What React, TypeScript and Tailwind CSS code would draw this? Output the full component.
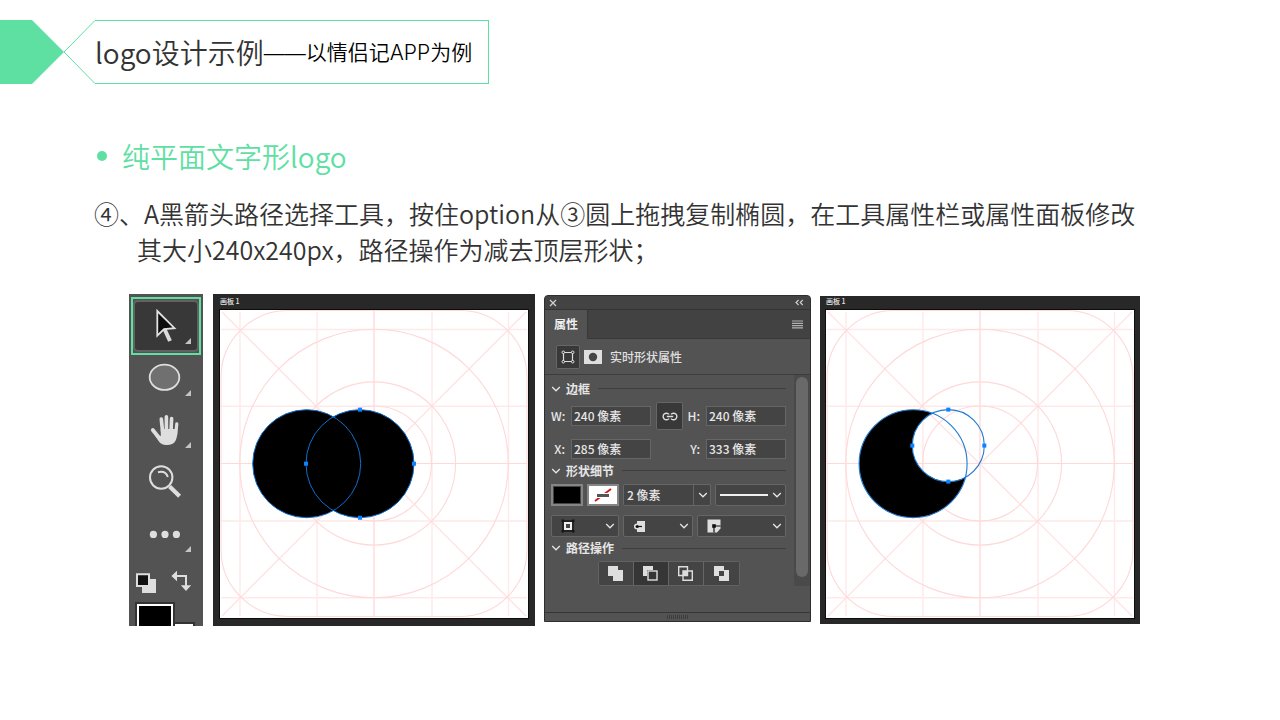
import type { ReactNode } from "react";

const FONT = "font-['Noto_Sans_CJK_SC','Noto_Sans',sans-serif]";

function Corner() {
  return <path d="M57 38 V44 H51 Z" fill="#c4c4c4" />;
}

const tools = [
  {
    name: "路径选择工具",
    active: true,
    icon: (
      <>
        <rect x="0" y="1" width="64" height="50" rx="4" fill="#383838" stroke="#626262" strokeWidth="2" />
        <path d="M30 28 L36 41" stroke="#dadada" strokeWidth="4" />
        <path d="M23.3 11 V35.6 L30 29 L40.5 28.2 Z" fill="#0d0d0d" stroke="#e0e0e0" strokeWidth="1.8" />
        <Corner />
      </>
    ),
  },
  {
    name: "椭圆工具",
    active: false,
    icon: (
      <>
        <ellipse cx="30.5" cy="25.3" rx="14.8" ry="12.6" fill="#707070" stroke="#dedede" strokeWidth="1.8" />
        <Corner />
      </>
    ),
  },
  {
    name: "抓手工具",
    active: false,
    icon: (
      <>
        <g stroke="#dedede" strokeWidth="3.6" strokeLinecap="round">
          <path d="M27.3 15 L28.6 28" />
          <path d="M32.4 12.8 V27" />
          <path d="M37.6 14.6 L37 28" />
          <path d="M42.8 19.8 L41.6 31" strokeWidth="3.2" />
          <path d="M18.8 26 L26 35" strokeWidth="3.8" />
        </g>
        <path
          d="M26.8 25 H43.2 C43.4 31 43 34 41.5 36.8 C40 39.8 37 41 33 41 C28.5 41 26.8 39.8 24.8 37.2 L20 30 C23 30.6 24.5 32 26.8 32 Z"
          fill="#dedede"
        />
        <Corner />
      </>
    ),
  },
  {
    name: "缩放工具",
    active: false,
    icon: (
      <g fill="none" stroke="#dedede">
        <circle cx="27.2" cy="21.5" r="11.2" strokeWidth="2" />
        <path d="M24 16.2 C29 15 32.5 17 33.8 21" strokeWidth="2" />
        <path d="M35.6 30.4 L45.6 40.2" strokeWidth="4.2" />
      </g>
    ),
  },
  {
    name: "编辑工具栏",
    active: false,
    icon: (
      <>
        <g fill="#dedede">
          <circle cx="19.4" cy="26.4" r="3.6" />
          <circle cx="31" cy="26.4" r="3.6" />
          <circle cx="42.4" cy="26.4" r="3.6" />
        </g>
        <Corner />
      </>
    ),
  },
];

function Toolbar() {
  return (
    <div className="mr-px flex flex-col bg-[#535353] pt-[6px]">
      <div className="flex flex-col px-[5px]">
        {tools.map((tool) => (
          <button
            key={tool.name}
            aria-label={tool.name}
            className={tool.active ? "h-[52px] outline-2 outline-offset-1 outline-[#5fdfa2]" : "h-[52px]"}
          >
            <svg viewBox="0 0 64 52" className="h-full w-full overflow-visible">{tool.icon}</svg>
          </button>
        ))}
      </div>
      <div className="flex h-[42px]">
        <button aria-label="默认前景色和背景色" className="flex-1">
          <svg viewBox="0 0 37 42" className="h-full w-full">
            <path d="M13 19 H27 V33 H13 Z" fill="#dedede" />
            <path d="M8 14.2 H20 V26 H8 Z" fill="#111" stroke="#dedede" strokeWidth="2" />
          </svg>
        </button>
        <button aria-label="切换前景色和背景色" className="flex-1">
          <svg viewBox="37 0 37 42" className="h-full w-full">
            <path d="M46 16 H57 V27" fill="none" stroke="#dedede" strokeWidth="2" />
            <path d="M42.4 16 L48 10.8 V21.2 Z M57 31 L51.8 25.2 H62.2 Z" fill="#dedede" />
          </svg>
        </button>
      </div>
      <button aria-label="前景色" className="h-[24px]">
        <svg viewBox="0 0 74 24" className="h-full w-full">
          <path d="M45 20 H66 V24 H45 Z" fill="#333" />
          <path d="M45 22 H64 V24 H45 Z" fill="#fff" />
          <path d="M6 0 H46 V24 H6 Z" fill="#333" />
          <path d="M8 2 H44 V24 H8 Z" fill="#fff" />
          <path d="M10 4 H42 V24 H10 Z" fill="#000" />
        </svg>
      </button>
    </div>
  );
}

function Handles({ cx, cy, r }: { cx: number; cy: number; r: number }) {
  const points = [[cx, cy - r], [cx + r, cy], [cx, cy + r], [cx - r, cy]];
  return (
    <g fill="#0a84ff">
      {points.map(([x, y]) => (
        <rect key={`${x}-${y}`} x={x - 2} y={y - 2} width="4" height="4" />
      ))}
    </g>
  );
}

function Artboard({ className, children }: { className: string; children: ReactNode }) {
  return (
    <figure className={`flex flex-col bg-[#282828] ${className}`}>
      <figcaption className="flex h-[14px] items-center pb-[3px] text-[7px] leading-none font-medium text-[#e4e4e4]">
        画板 1
      </figcaption>
      <svg viewBox="0 0 308 308" className="w-full bg-white outline outline-[#0c0c0c]">
        <g fill="none" stroke="#ffd8d8" strokeWidth="1.1">
          <path
            d="M20 2 V306 M97 2 V306 M212 2 V306 M288.5 2 V306 M1 19.5 H307 M1 96.3 H307 M1 211 H307 M1 287.8 H307"
            stroke="#ffe9e9"
            strokeWidth="1.4"
          />
          <path d="M2 2 L306 306 M306 2 L2 306" stroke="#ffe3e3" strokeWidth="1.3" />
          <path d="M154 1 V306" stroke="#ffdfdf" strokeWidth="1.6" />
          <path d="M1 153.5 H307" />
          <circle cx="154" cy="153.5" r="134.3" />
          <circle cx="154" cy="153.5" r="81.6" />
          <circle cx="154" cy="153.5" r="57.5" />
          <rect x="1" y="0.5" width="306" height="306" rx="67" />
        </g>
        {children}
      </svg>
    </figure>
  );
}

function Chevron() {
  return (
    <svg width="10" height="6" viewBox="0 0 10 6" className="shrink-0">
      <path d="M1.2 1 L5 4.8 L8.8 1" fill="none" stroke="#e4e4e4" strokeWidth="1.3" />
    </svg>
  );
}

function SectionTitle({ className, children }: { className: string; children: ReactNode }) {
  return (
    <h3 className={`flex items-center text-xs font-bold text-[#e6e6e6] ${className}`}>
      <Chevron />
      <span className="ml-[5px]">{children}</span>
      <span className="ml-[8px] h-px flex-1 bg-[#3d3d3d]" />
    </h3>
  );
}

function Field({ id, value }: { id: string; value: string }) {
  return (
    <input
      id={id}
      defaultValue={value}
      className="h-[20px] w-full min-w-0 border border-[#666] bg-[#444] px-[2px] pb-[2px] text-xs leading-none font-medium text-[#e6e6e6]"
    />
  );
}

const LABEL = "text-right text-xs font-medium text-[#e6e6e6]";
const DROPDOWN = "flex h-[22px] items-center justify-between rounded-xs border border-[#666] bg-[#444] pr-[3px]";

const pathOps = [
  {
    name: "合并形状",
    active: false,
    icon: <path d="M1 1 H11 V5 H16 V16 H6 V11 H1 Z" fill="#dedede" />,
  },
  {
    name: "减去顶层形状",
    active: true,
    icon: (
      <>
        <path d="M1 1 H11 V5 H5 V11 H1 Z" fill="#dedede" />
        <rect x="6" y="6" width="9" height="9" fill="none" stroke="#dedede" strokeWidth="1.4" />
      </>
    ),
  },
  {
    name: "与形状区域相交",
    active: false,
    icon: (
      <>
        <rect x="6" y="6" width="4.5" height="4.5" fill="#dedede" />
        <path d="M1.7 1.7 H10.5 V10.5 H1.7 Z M6 6 H15.3 V15.3 H6 Z" fill="none" stroke="#dedede" strokeWidth="1.4" />
      </>
    ),
  },
  {
    name: "排除重叠形状",
    active: false,
    icon: <path d="M1 1 H11 V5 H16 V16 H6 V11 H1 Z M6 6 V11 H11 V6 Z" fill="#dedede" fillRule="evenodd" />,
  },
];

function PropertiesPanel() {
  return (
    <section className="mt-px self-start overflow-hidden rounded-t border border-[#2e2e2e] bg-[#535353]">
      <div className="flex h-[14px] items-center justify-between border-b border-[#333] bg-[#434343] px-[4px]">
        <button aria-label="关闭">
          <svg width="8" height="8" viewBox="0 0 8 8">
            <path d="M1 1 L7 7 M7 1 L1 7" stroke="#d0d0d0" strokeWidth="1.3" />
          </svg>
        </button>
        <button aria-label="折叠" className="mr-[2px]">
          <svg width="9" height="7" viewBox="0 0 9 7">
            <path d="M3.6 1 L1 3.5 L3.6 6 M7.8 1 L5.2 3.5 L7.8 6" fill="none" stroke="#d0d0d0" strokeWidth="1.1" />
          </svg>
        </button>
      </div>

      <div className="flex h-[29px] bg-[#424242]">
        <h2 className="flex items-center border-r border-[#383838] bg-[#535353] px-[9px] pb-[2px] text-xs font-bold text-[#eee]">
          属性
        </h2>
        <div className="flex flex-1 items-center justify-end border-b border-[#383838] pr-[7px]">
          <button aria-label="面板菜单">
            <svg width="11" height="9" viewBox="0 0 11 9">
              <path d="M0 1 H11 M0 3.3 H11 M0 5.6 H11 M0 7.9 H11" stroke="#b0b0b0" strokeWidth="1.2" />
            </svg>
          </button>
        </div>
      </div>

      <div className="flex h-[36px] items-center border-b border-[#3d3d3d] pl-[11px]">
        <button aria-label="形状" className="flex size-[24px] items-center justify-center rounded-xs border border-[#666] bg-[#383838]">
          <svg width="14" height="14" viewBox="0 0 14 14" fill="none" stroke="#dedede">
            <path d="M2.5 2.5 H11.5 V11.5 H2.5 Z" strokeWidth="1.2" />
            <g fill="#383838" strokeWidth="1">
              <circle cx="2.3" cy="2.3" r="1.3" />
              <circle cx="11.7" cy="2.3" r="1.3" />
              <circle cx="2.3" cy="11.7" r="1.3" />
              <circle cx="11.7" cy="11.7" r="1.3" />
            </g>
          </svg>
        </button>
        <button aria-label="蒙版" className="ml-[4px]">
          <svg width="18" height="14" viewBox="0 0 18 14">
            <path d="M0 0 H18 V14 H0 Z" fill="#dedede" />
            <circle cx="9" cy="7" r="4.2" fill="#444" />
          </svg>
        </button>
        <span className="ml-[8px] text-xs font-medium text-[#e0e0e0]">实时形状属性</span>
      </div>

      <div className="flex">
        <div className="flex flex-1 flex-col pr-[8px] pl-[6px]">
          <SectionTitle className="h-[27px]">边框</SectionTitle>
          <div className="grid grid-cols-[20px_80px_55px_80px] items-center">
            <label htmlFor="shape-w" className={`${LABEL} pr-[6px]`}>W:</label>
            <Field id="shape-w" value="240 像素" />
            <div className="flex items-center justify-between pr-[6px] pl-[5px]">
              <button aria-label="链接宽度和高度" className="flex h-[28px] w-[27px] items-center justify-center rounded-xs border border-[#666] bg-[#383838]">
                <svg width="16" height="9" viewBox="0 0 16 9" fill="none" stroke="#dedede" strokeWidth="1.4">
                  <path d="M7 2.4 A3.3 3.3 0 1 0 7 6.6 M9 2.4 A3.3 3.3 0 1 1 9 6.6 M4.8 4.5 H11.2" />
                </svg>
              </button>
              <label htmlFor="shape-h" className={LABEL}>H:</label>
            </div>
            <Field id="shape-h" value="240 像素" />
          </div>
          <div className="mt-[9px] grid grid-cols-[20px_80px_55px_80px] items-center">
            <label htmlFor="shape-x" className={`${LABEL} pr-[6px]`}>X:</label>
            <Field id="shape-x" value="285 像素" />
            <label htmlFor="shape-y" className={`${LABEL} pr-[6px]`}>Y:</label>
            <Field id="shape-y" value="333 像素" />
          </div>

          <SectionTitle className="h-[23px]">形状细节</SectionTitle>
          <div className="mt-[2px] flex gap-[4px]">
            <button aria-label="填充" className="h-[22px] w-[32px] border-2 border-[#858585] bg-black ring-1 ring-inset ring-[#444]" />
            <button aria-label="描边" className="h-[22px] w-[32px] border-2 border-[#858585] bg-white">
              <svg viewBox="0 0 28 18" className="h-full w-full">
                <path d="M6 15 L22 3" stroke="#d01616" strokeWidth="1.8" />
                <path d="M7 7 H21 V12 H7 Z" fill="#fff" />
                <path d="M8 8 H20 V11 H8 Z" fill="#555" />
              </svg>
            </button>
            <div className="relative w-[88px]">
              <select
                aria-label="描边宽度"
                className="block h-[22px] w-full appearance-none rounded-xs border border-[#666] bg-[#444] px-[3px] text-xs leading-none font-medium text-[#e6e6e6]"
              >
                <option>2 像素</option>
              </select>
              <span className="pointer-events-none absolute inset-y-0 right-0 flex w-[18px] items-center justify-center border-l border-[#666]">
                <Chevron />
              </span>
            </div>
            <button aria-label="描边类型" aria-haspopup="listbox" className={`${DROPDOWN} flex-1 pl-[4px]`}>
              <span className="mr-[4px] h-[2px] flex-1 bg-[#eee]" />
              <Chevron />
            </button>
          </div>

          <div className="mt-[9px] flex gap-[4px]">
            <button aria-label="描边对齐" aria-haspopup="listbox" className={`${DROPDOWN} w-[68px] pl-[9px]`}>
              <svg width="14" height="14" viewBox="0 0 14 14">
                <path d="M2 2 H12 V12 H2 Z" fill="none" stroke="#161616" strokeWidth="1.4" />
                <path d="M4 4 H10 V10 H4 Z" fill="none" stroke="#eee" strokeWidth="2" />
                <path d="M0.5 0.5 H3 V3 H0.5 Z M11 0.5 H13.5 V3 H11 Z M0.5 11 H3 V13.5 H0.5 Z M11 11 H13.5 V13.5 H11 Z" fill="#161616" />
              </svg>
              <Chevron />
            </button>
            <button aria-label="描边端点" aria-haspopup="listbox" className={`${DROPDOWN} w-[70px] pl-[10px]`}>
              <svg width="12" height="13" viewBox="0 0 12 13">
                <path d="M3 1 H11 V12 H3 V9.6 A3.1 3.1 0 0 1 3 3.4 Z" fill="#dedede" />
                <path d="M3 6.5 H8" stroke="#111" strokeWidth="1.2" />
                <circle cx="3.2" cy="6.5" r="1.6" fill="#111" />
              </svg>
              <Chevron />
            </button>
            <button aria-label="描边角点" aria-haspopup="listbox" className={`${DROPDOWN} flex-1 pl-[9px]`}>
              <svg width="14" height="14" viewBox="0 0 14 14">
                <path d="M0.5 0.5 H13.5 V9.5 L10 13.5 H0.5 Z" fill="#dedede" />
                <path d="M7 13.5 V7 H13.5" fill="none" stroke="#111" strokeWidth="1.2" />
                <path d="M5.2 5.2 H8.8 V8.8 H5.2 Z" fill="#111" />
              </svg>
              <Chevron />
            </button>
          </div>

          <SectionTitle className="h-[22px]">路径操作</SectionTitle>
          <div className="mt-[2px] flex justify-center">
            <div className="flex divide-x divide-[#666] rounded-xs border border-[#626262]">
              {pathOps.map((op) => (
                <button
                  key={op.name}
                  aria-label={op.name}
                  aria-pressed={op.active}
                  className={`flex h-[23px] w-[35px] items-center justify-center ${op.active ? "bg-[#363636]" : "bg-[#444]"}`}
                >
                  <svg width="17" height="17" viewBox="0 0 17 17">{op.icon}</svg>
                </button>
              ))}
            </div>
          </div>
        </div>
        <div className="w-[16px] bg-[#4a4a4a] px-[2px] pt-[2px] pb-[9px]">
          <div className="h-full rounded-full bg-[#696969]" />
        </div>
      </div>

      <div className="mt-[26px] flex h-[9px] items-center justify-center border-t border-[#363636]">
        <svg width="21" height="4" viewBox="0 0 21 4">
          <path d="M0 2 H21" stroke="#3d3d3d" strokeWidth="4" strokeDasharray="1 1" />
        </svg>
      </div>
    </section>
  );
}

export default function App() {
  return (
    <main className={`min-h-screen bg-white pt-[20px] text-[#333] ${FONT}`}>
      <header className="flex h-[64px]">
        <svg width="64" height="64" viewBox="0 0 64 64" className="shrink-0">
          <path d="M0 0 H32 L64 32 L32 64 H0 Z" fill="#5fe0a3" />
        </svg>
        <svg width="31" height="64" viewBox="0 0 31 64" className="shrink-0">
          <path d="M31 0.5 L0 32 L31 63.5" fill="none" stroke="#5fe0a3" strokeWidth="1" />
        </svg>
        <h1 className="flex items-center border-y border-r border-[#5fe0a3] pr-[16px] text-[28px] leading-none font-[350] whitespace-nowrap">
          logo设计示例
          <span className="font-['Liberation_Sans',sans-serif] text-[21px] text-black">——</span>
          <span className="font-['Inter','Noto_Sans_CJK_SC',sans-serif] text-[21px] text-black">以情侣记APP为例</span>
        </h1>
      </header>

      <h2 className="mt-[54px] flex items-center pl-[97px] text-[28px] leading-[36px] font-[350] text-[#5fe0a3]">
        <span className="mr-[15px] size-[10px] rounded-full bg-[#5fe0a3]" />
        纯平面文字形logo
      </h2>

      <p className="mt-[21px] pl-[94px] text-[25px] leading-[36px] font-[350] whitespace-nowrap">
        <span className="block">④、A黑箭头路径选择工具，按住option从③圆上拖拽复制椭圆，在工具属性栏或属性面板修改</span>
        <span className="block pl-[43px]">其大小240x240px，路径操作为减去顶层形状；</span>
      </p>

      <div className="mt-[27px] grid grid-cols-[75px_322fr_267px_320fr] items-start gap-x-[9px] pr-[140px] pl-[129px]">
        <Toolbar />
        <Artboard className="px-[7px] pt-[2px] pb-[8px]">
          <circle cx="86.7" cy="153.7" r="54" />
          <circle cx="140" cy="153.7" r="54" />
          <g fill="none" stroke="#0f6fce" strokeWidth="1">
            <circle cx="86.7" cy="153.7" r="54" />
            <circle cx="140" cy="153.7" r="54" />
          </g>
          <Handles cx={140} cy={153.7} r={54} />
        </Artboard>
        <PropertiesPanel />
        <Artboard className="mt-[2px] px-[6px] pb-[6px]">
          <mask id="front-minus">
            <path d="M0 0 H308 V308 H0 Z" fill="#fff" />
            <circle cx="122.3" cy="135.6" r="36" fill="#000" />
          </mask>
          <circle cx="87.1" cy="153.7" r="54" mask="url(#front-minus)" />
          <g fill="none" stroke="#1f7ad2" strokeWidth="1.1">
            <circle cx="87.1" cy="153.7" r="54" />
            <circle cx="122.3" cy="135.6" r="36" />
          </g>
          <Handles cx={122.3} cy={135.6} r={36} />
        </Artboard>
      </div>
    </main>
  );
}
